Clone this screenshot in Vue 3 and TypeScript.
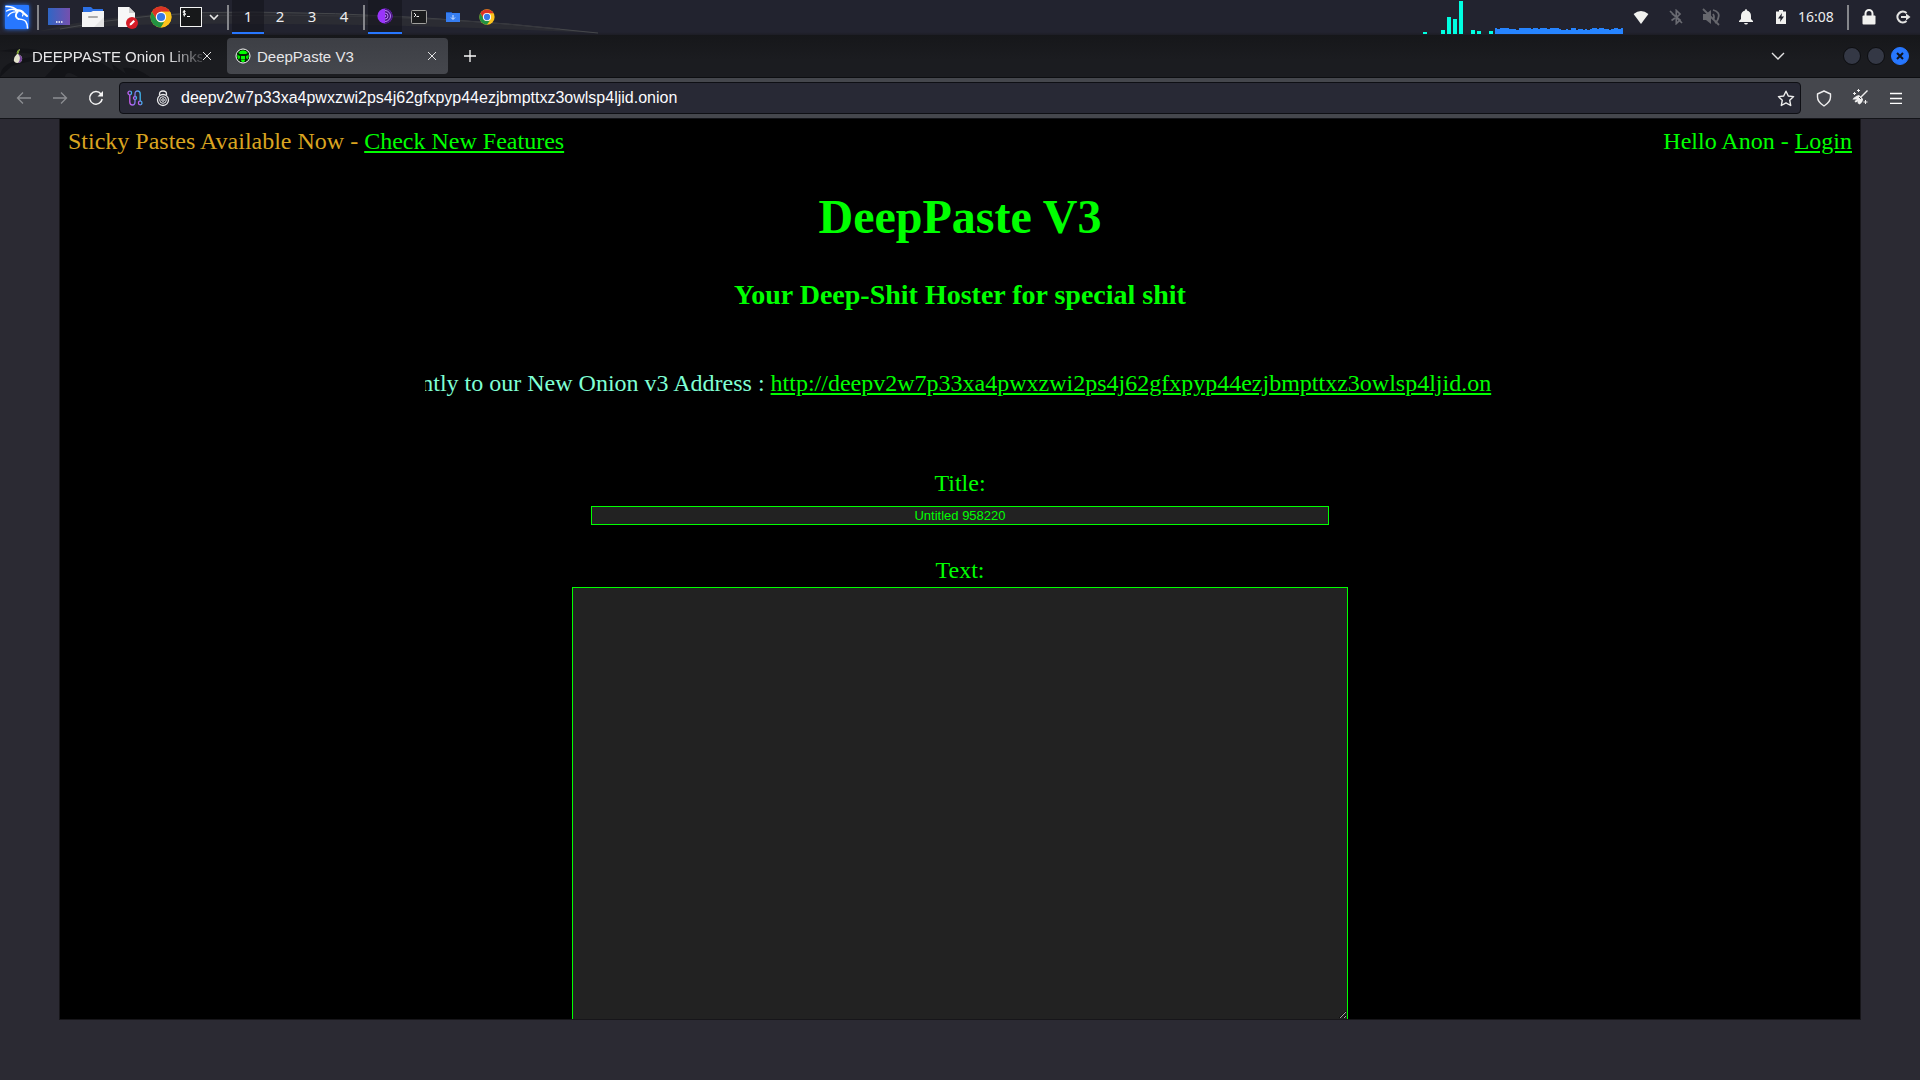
<script setup lang="ts">
import { ref } from 'vue'

const address = 'deepv2w7p33xa4pwxzwi2ps4j62gfxpyp44ezjbmpttxz3owlsp4ljid.onion'
const url = ref(address)
const title = ref('Untitled 958220')
const body = ref('')
const workspaces = [1, 2, 3, 4]
const activeWorkspace = ref(1)

// CPU load samples, one bar each; zero leaves a gap
const load = [2, 0, 0, 4, 17, 15, 33, 0, 4, 3, 0, 3]
const noise = [6, 5, 6, 6, 6, 6, 5, 5, 5, 4, 6, 6, 6, 6, 6, 5, 6, 6, 5, 6, 6, 6, 5, 6, 6, 6, 6, 5, 4, 4, 5, 4, 6, 6, 4, 5, 5, 4, 5, 4, 5, 6, 6, 5, 6, 6, 5, 5, 4, 5, 6, 6, 5, 6]
</script>

<template>
  <div class="desktop">
    <header class="panel">
      <svg class="wallpaper" width="640" height="35" viewBox="0 0 640 35" aria-hidden="true">
        <path d="M40 31Q120 10 260 12Q420 13 600 33Q400 24 260 24Q130 22 40 31Z" fill="#2b2c33" />
        <path d="M60 29Q150 11 250 12Q420 13 598 33" fill="none" stroke="#45474b" />
        <path d="M190 16Q400 12 560 29" fill="none" stroke="#36373d" />
      </svg>
      <button class="cell" aria-label="Applications">
        <svg class="kali" width="26" height="26" viewBox="0 0 26 26">
          <rect x="1" y="1" width="24" height="24" rx="1" fill="#2777ff" />
          <g fill="none" stroke="#fff" stroke-linecap="round">
            <path d="M2 2.500Q9 2 14 6.500M2.500 7Q8 3.500 14 7M4 12Q7 7 14 8" stroke-width="1.400" />
            <path d="M12 6.500Q17 5.500 19.500 9L23 12" stroke-width="2.200" />
            <path d="M19.500 9L18.500 12" stroke-width="1.200" />
            <path d="M13 8.500Q10 12.500 14.500 15" stroke-width="2" />
            <path d="M14.500 15Q21 15.500 22 18Q23.500 20 23.500 24" stroke-width="1.500" />
          </g>
        </svg>
      </button>
      <span class="bar"></span>
      <button class="cell" aria-label="Show desktop">
        <svg width="22" height="18" viewBox="0 0 22 18">
          <defs><linearGradient id="desk"><stop stop-color="#2f66c5" /><stop offset="1" stop-color="#7650ae" /></linearGradient></defs>
          <path fill="url(#desk)" d="M0 0H22V17H0Z" /><path d="M8 14h1.500M10.500 14h1.500M13 14h1.500" stroke="#fff" stroke-width="1.500" />
        </svg>
      </button>
      <button class="cell" aria-label="Files">
        <svg width="22" height="20" viewBox="0 0 22 20"><path d="M1 6V0H9L11 2H21V6Z" fill="#2c70e4" /><path d="M0 5H9L11 4H22V20H0Z" fill="#f4f4f4" /><path d="M22 10V20H12Z" fill="#e3e3e3" /><path d="M7 10h8" stroke="#aaa" stroke-width="2" stroke-linecap="round" /></svg>
      </button>
      <button class="cell" aria-label="Text editor">
        <svg width="22" height="24" viewBox="0 0 22 24"><path d="M2 2H13L19 8V22H2Z" fill="#f7f7f7" /><path d="M13 2V8H19Z" fill="#cfcfcf" /><circle cx="16" cy="18" r="6" fill="#d51c27" /><path d="M13.500 20.500L14 18.500L17.500 15L19 16.500L15.500 20Z" fill="#fff" /></svg>
      </button>
      <button class="cell" aria-label="Chrome">
        <svg width="22" height="22" viewBox="0 0 22 22"><circle cx="11" cy="11" r="10.500" fill="#fbc116" /><path d="M1.900 5.800A10.500 10.500 0 0 1 20.100 5.800H11L6.500 13.600Z" fill="#dc3325" /><path d="M1.900 5.800L6.500 13.600Q8.500 16.500 11 16.200H15L10.700 21.500A10.500 10.500 0 0 1 1.900 5.800Z" fill="#229342" /><path d="M15.500 13.600L11 21.500A10.500 10.500 0 0 0 20.100 5.800H11Z" fill="#fcc31c" /><circle cx="11" cy="11" r="5.200" fill="#fff" /><circle cx="11" cy="11" r="4.100" fill="#3778e6" /></svg>
      </button>
      <button class="cell term" aria-label="Terminal">
        <svg width="22" height="20" viewBox="0 0 22 20"><rect x=".5" y=".5" width="21" height="19" fill="#17181a" stroke="#f4f4f4" /><path d="M5.500 4.500Q3 3.500 3 5Q3 6 4.500 6Q6 6.500 5.500 7.500Q4.500 8.500 3 7.500M4.300 3V9.500M7 9.500H10" fill="none" stroke="#fff" /></svg>
      </button>
      <button class="cell more" aria-label="More terminals">
        <svg width="10" height="8" viewBox="0 0 10 8"><path d="M1 2L5 6L9 2" fill="none" stroke="#e8e8e8" stroke-width="1.600" /></svg>
      </button>
      <span class="bar"></span>
      <button v-for="n in workspaces" :key="n" class="space" :class="{ active: n === activeWorkspace }" @click="activeWorkspace = n">{{ n }}</button>
      <span class="bar"></span>
      <button class="cell active" aria-label="Tor Browser">
        <svg width="16" height="16" viewBox="0 0 16 16"><circle cx="8" cy="8" r="7.600" fill="#9a35fb" /><path d="M8 .4A7.600 7.600 0 0 1 8 15.600Z" fill="#4d1787" /><path d="M8 2.500A5.500 5.500 0 0 1 8 13.500M8 5A3 3 0 0 1 8 11" fill="none" stroke="#b784f2" /><path d="M8 7A1 1 0 0 1 8 9Z" fill="#c69aff" /></svg>
      </button>
      <button class="cell" aria-label="Terminal window">
        <svg width="16" height="14" viewBox="0 0 16 14"><rect x=".5" y=".5" width="15" height="13" rx="1" fill="#1b1c1e" stroke="#a0a09d" /><path d="M3 3L5 5L3 7M5.500 6.500H8" fill="none" stroke="#eee" /></svg>
      </button>
      <button class="cell" aria-label="Downloads window">
        <svg width="14" height="12" viewBox="0 0 14 12"><path d="M0 1H5L6 2H14V11H0Z" fill="#367df0" /><path d="M0 1H5L6 2H0Z" fill="#1a5ac5" /><path d="M7 4V8M5 6.500L7 8.500L9 6.500" stroke="#d7e7ff" fill="none" /></svg>
      </button>
      <button class="cell" aria-label="Chrome window">
        <svg width="16" height="16" viewBox="0 0 22 22"><circle cx="11" cy="11" r="10.500" fill="#fcc31c" /><path d="M1.900 5.800A10.500 10.500 0 0 1 20.100 5.800H11L6.500 13.600Z" fill="#dc3325" /><path d="M1.900 5.800L6.500 13.600Q8.500 16.500 11 16.200H15L10.700 21.500A10.500 10.500 0 0 1 1.900 5.800Z" fill="#229342" /><circle cx="11" cy="11" r="5.600" fill="#fff" /><circle cx="11" cy="11" r="4.300" fill="#3778e6" /></svg>
      </button>

      <span class="grow"></span>
      <div class="load" aria-hidden="true">
        <i v-for="(h, i) in load" :key="i" :style="{ height: h + 'px' }"></i>
      </div>
      <svg class="noise" width="128" height="6" viewBox="0 0 54 6" preserveAspectRatio="none" aria-hidden="true">
        <rect v-for="(h, i) in noise" :key="i" :x="i" :y="6 - h" width="1" :height="h" fill="#2684ff" shape-rendering="crispEdges" />
      </svg>
      <button class="cell status" aria-label="Network">
        <svg width="16" height="16" viewBox="0 0 16 16"><path d="M8 15L.6 5Q8-1 15.400 5Z" fill="#f1f1ef" /></svg>
      </button>
      <button class="cell status" aria-label="Bluetooth">
        <svg width="16" height="16" viewBox="0 0 16 16" fill="none" stroke="#6a6b72" stroke-width="1.700"><path d="M4 4.500L12 11L8.300 14.500V1.500L12 5L9 8M7 9L3.500 11.500M2 2L14 14" /></svg>
      </button>
      <button class="cell status" aria-label="Sound muted">
        <svg width="18" height="18" viewBox="0 0 18 18"><path d="M1 6H4L9 2V16L4 12H1Z" fill="#66676d" /><path d="M11 6Q13 9 11 12M11 2Q18 4 16.500 9Q16 13 13 15M1 1L17 17" stroke="#66676d" stroke-width="1.800" fill="none" /></svg>
      </button>
      <button class="cell status" aria-label="Notifications">
        <svg width="14" height="16" viewBox="0 0 14 16"><path d="M7 0Q8 0 8 1.500Q12 2.500 12 7V10L14 12V13H0V12L2 10V7Q2 2.500 6 1.500Q6 0 7 0ZM5 14H9Q8.500 15.500 7 15.500Q5.500 15.500 5 14Z" fill="#f1f1ef" /></svg>
      </button>
      <button class="cell status" aria-label="Battery charging">
        <svg width="10" height="16" viewBox="0 0 10 16"><path d="M3 1H7V2.500H10V15H0V2.500H3Z" fill="#f1f1ef" /><path d="M6 4L2 9.500H4.500L4 13L8 7.500H5.500Z" fill="#20212c" /></svg>
      </button>
      <time class="clock">16:08</time>
      <span class="bar"></span>
      <button class="cell" aria-label="Lock">
        <svg width="14" height="16" viewBox="0 0 14 16"><path d="M3.500 7V4.500A3.500 3.500 0 0 1 10.500 4.500V7" fill="none" stroke="#f1f1ef" stroke-width="2" /><rect x="0.500" y="6.500" width="13" height="9" rx="1" fill="#f1f1ef" /></svg>
      </button>
      <button class="cell" aria-label="Log out">
        <svg width="16" height="14" viewBox="0 0 16 14"><path d="M11.500 3A5.400 5.400 0 1 0 11.500 11M6 7H12" fill="none" stroke="#e4e4e3" stroke-width="2.200" /><path d="M11 3.500L15.500 7L11 10.500Z" fill="#e4e4e3" /></svg>
      </button>
    </header>

    <div class="tabs">
      <svg class="wallpaper" width="180" height="42" viewBox="0 0 180 42" aria-hidden="true">
        <path d="M0 16Q24 10 50 18L32 22Q0 26 0 42L12 31Q40 22 60 26L45 42H65Q66 34 78 42H150Q135 31 123 33L126 39L112 29L114 36L102 28Q90 20 70 26L50 20Z" fill="#131418" />
      </svg>
      <div class="tab first">
        <svg class="fav" width="16" height="16" viewBox="0 0 16 16"><path d="M7 6Q6 3 10 1L8 6Q13 8 12 12Q11 15 7 15Q3 14 4 11Q4 9 7 6Z" fill="#e4e3ce" /><path d="M8 6Q13 8 12 12Q11 15 8 15Q12 10 8 6Z" fill="#77479a" /><path d="M7 6Q6 3 10 1L8 6Z" fill="#789d28" /></svg>
        <span class="name faded">DEEPPASTE Onion Links</span>
        <button class="close" aria-label="Close tab"><svg width="10" height="10" viewBox="0 0 10 10"><path d="M1 1L9 9M9 1L1 9" stroke="#e3e3e4" /></svg></button>
      </div>
      <div class="tab current">
        <svg class="fav" width="16" height="16" viewBox="0 0 16 16"><circle cx="8" cy="8" r="7" fill="#031003" stroke="#fff" /><circle cx="8" cy="8" r="5.800" fill="#00e600" /><path d="M2.500 4.500L5 6H11L13.500 4.500V7L11 8V10L13 12L10 13.500V11.500H6V13.500L3 12L5 10V8L2.500 7Z" fill="#062006" /><path d="M5 3H11V6H5ZM6 8H10V11H6ZM7 12H9V14H7Z" fill="#0f0" /></svg>
        <span class="name">DeepPaste V3</span>
        <button class="close" aria-label="Close tab"><svg width="10" height="10" viewBox="0 0 10 10"><path d="M1 1L9 9M9 1L1 9" stroke="#e3e3e4" /></svg></button>
      </div>
      <button class="add" aria-label="New tab"><svg width="12" height="12" viewBox="0 0 12 12"><path d="M6 0V12M0 6H12" stroke="#fafafa" stroke-width="1.300" /></svg></button>
      <span class="grow"></span>
      <button class="list" aria-label="List all tabs"><svg width="14" height="8" viewBox="0 0 14 8"><path d="M1 1L7 7L13 1" fill="none" stroke="#e3e3e4" stroke-width="1.400" /></svg></button>
      <div class="window">
        <button class="dot" aria-label="Minimize"></button>
        <button class="dot" aria-label="Maximize"></button>
        <button class="dot quit" aria-label="Close window"><svg width="8" height="8" viewBox="0 0 8 8"><path d="M1 1L7 7M7 1L1 7" stroke="#10131c" stroke-width="2" /></svg></button>
      </div>
    </div>

    <nav class="tools">
      <button class="tool" aria-label="Back"><svg width="16" height="16" viewBox="0 0 16 16"><path d="M15 8H1.500M7 2.500L1.500 8L7 13.500" fill="none" stroke="#8c8e92" stroke-width="1.300" /></svg></button>
      <button class="tool" aria-label="Forward"><svg width="16" height="16" viewBox="0 0 16 16"><path d="M1 8H14.500M9 2.500L14.500 8L9 13.500" fill="none" stroke="#8c8e92" stroke-width="1.300" /></svg></button>
      <button class="tool" aria-label="Reload"><svg width="16" height="16" viewBox="0 0 16 16"><path d="M13 4A6.300 6.300 0 1 0 14.200 9" fill="none" stroke="#f4f4f4" stroke-width="1.500" /><path d="M15 1V6.500H9.500Z" fill="#f4f4f4" /></svg></button>
      <div class="address">
        <button class="info" aria-label="Tor circuit">
          <svg width="16" height="16" viewBox="0 0 16 16" fill="none" stroke-width="1.300">
            <defs><linearGradient id="circuit"><stop stop-color="#c85cf0" /><stop offset=".5" stop-color="#8175e8" /><stop offset="1" stop-color="#3fb6f0" /></linearGradient></defs>
            <g stroke="url(#circuit)"><circle cx="2.800" cy="3" r="1.800" /><circle cx="8" cy="8" r="1.500" /><circle cx="13.200" cy="13" r="1.800" /><path d="M2.800 5V12Q2.800 15 5.500 15Q8 15 8 12V9.500M8 6.500V4Q8 1 10.500 1Q13.200 1 13.200 4V11" /></g>
          </svg>
        </button>
        <button class="info" aria-label="Site security">
          <svg width="14" height="17" viewBox="0 0 14 17" fill="none" stroke="#e9e9eb"><path d="M3.500 5V4Q3.500 1 7 1Q10.500 1 10.500 4V5" stroke-width="1.300" /><circle cx="7" cy="10" r="5.500" stroke-width="1.300" /><circle cx="7" cy="10" r="3.300" /><circle cx="7" cy="10" r="1.300" /></svg>
        </button>
        <input v-model="url" class="url" aria-label="Address" />
        <button class="info" aria-label="Bookmark">
          <svg width="18" height="17" viewBox="0 0 18 17"><path d="M9 1.200L11.300 6L16.600 6.600L12.700 10.200L13.700 15.500L9 12.900L4.300 15.500L5.300 10.200L1.400 6.600L6.700 6Z" fill="none" stroke="#eee" stroke-width="1.400" stroke-linejoin="round" /></svg>
        </button>
      </div>
      <button class="tool" aria-label="Security level"><svg width="16" height="17" viewBox="0 0 16 17"><path d="M8 1L14.500 4V7Q14.500 12 8 16Q1.500 12 1.500 7V4Z" fill="none" stroke="#eee" stroke-width="1.400" stroke-linejoin="round" /></svg></button>
      <button class="tool" aria-label="New identity"><svg width="18" height="18" viewBox="0 0 18 18"><path d="M16.500 1.500L9.500 8.500" stroke="#eee" stroke-width="1.400" /><path d="M8 6L12 10Q12 13 8.500 15.500L6.500 14L7 12.500L4.500 13.500L3.500 12L6 10.500H1.500Q3 7.500 8 6Z" fill="#eee" /><path d="M3.500 3V6M2 4.500H5M7.500 0V3M6 1.500H9M14.500 11V15M12.500 13H16.500" stroke="#eee" /><path d="M8 8L10 10" stroke="#45474d" /></svg></button>
      <button class="tool" aria-label="Menu"><svg width="12" height="12" viewBox="0 0 12 12"><path d="M0 1.500H12M0 6.500H12M0 11.500H12" stroke="#fff" stroke-width="1.300" /></svg></button>
    </nav>

    <main class="backdrop">
      <article class="page">
        <div class="notice">
          <span class="sticky">Sticky Pastes Available Now - <a href="#features">Check New Features</a></span>
          <span>Hello Anon - <a href="#login">Login</a></span>
        </div>
        <h1>DeepPaste V3</h1>
        <h3>Your Deep-Shit Hoster for special shit</h3>
        <div class="ticker">
          <p>ntly to our New Onion v3 Address : <a href="#address">http://deepv2w7p33xa4pwxzwi2ps4j62gfxpyp44ezjbmpttxz3owlsp4ljid.on</a></p>
        </div>
        <form class="paste" @submit.prevent>
          <label for="title">Title:</label>
          <input id="title" v-model="title" class="title" type="text" />
          <label for="text">Text:</label>
          <textarea id="text" v-model="body" class="text"></textarea>
        </form>
      </article>
    </main>
  </div>
</template>

<style>
body {
  margin: 0;
  background: #2b2a33;
}
</style>

<style scoped>
.desktop {
  display: flex;
  flex-direction: column;
  min-height: 100vh;
  font-family: "Liberation Sans", Arial, sans-serif;
}
button {
  display: flex;
  align-items: center;
  justify-content: center;
  flex: none;
  box-sizing: border-box;
  padding: 0;
  border: 0;
  background: none;
  color: inherit;
  font: inherit;
}
svg {
  display: block;
  flex: none;
}
.grow {
  flex: 1;
}
.wallpaper {
  position: absolute;
  top: 0;
  left: 0;
}

/* desktop panel */
.panel {
  position: relative;
  display: flex;
  height: 35px;
  background: linear-gradient(#22232f 0 32px, #1d1d25);
  color: #ececee;
  font: 14px/34px "Noto Sans", sans-serif;
}
.panel > * {
  z-index: 1;
}
.panel > .wallpaper {
  z-index: 0;
}
.cell {
  width: 34px;
  height: 34px;
}
.kali {
  filter: drop-shadow(0 0 2px #2777ff);
}
.term {
  width: 26px;
}
.more {
  width: 20px;
}
.status {
  width: 35px;
}
.bar {
  flex: none;
  width: 2px;
  height: 25px;
  margin: 5px 3px;
  background: #85868b;
}
.space {
  width: 32px;
  height: 34px;
  border-bottom: 2px solid transparent;
  font-size: 15px;
  line-height: 32px;
}
.active {
  background: rgb(20 20 28 / 60%);
  border-bottom: 2px solid #2777ff;
}
.load {
  display: flex;
  align-items: flex-end;
  gap: 2px;
  height: 34px;
}
.load i {
  width: 4px;
  box-sizing: border-box;
  background: #00ffe1;
}
.noise {
  align-self: flex-end;
  margin: 0 0 1px 2px;
}
.clock {
  width: 46px;
}

/* tab strip */
.tabs {
  position: relative;
  display: flex;
  align-items: center;
  box-sizing: border-box;
  height: 43px;
  border-bottom: 1px solid #0d0e11;
  background: linear-gradient(#16171a, #1b1c20 60%);
  color: #e6e6e8;
  font-size: 15px;
}
.tab {
  position: relative;
  display: flex;
  align-items: center;
  box-sizing: border-box;
  width: 221px;
  height: 36px;
  padding: 0 11px 0 8px;
  border-radius: 4px;
}
.first {
  margin-right: 4px;
  width: 223px;
  padding-left: 10px;
}
.current {
  background: linear-gradient(#3d3f45, #45474d);
}
.name {
  flex: 1;
  margin-left: 6px;
  overflow: hidden;
  white-space: nowrap;
}
.faded {
  mask-image: linear-gradient(to right, #000 80%, rgb(0 0 0 / 20%));
}
.close {
  width: 10px;
  height: 20px;
}
.add {
  width: 44px;
  height: 36px;
}
.list {
  width: 36px;
  height: 36px;
  margin-right: 47px;
}
.window {
  display: flex;
  gap: 6px;
  margin-right: 11px;
}
.dot {
  width: 18px;
  height: 18px;
  border: 1px solid #0c0d10;
  border-radius: 50%;
  background: #343845;
}
.quit {
  border-color: #2777ff;
  background: #2777ff;
}

/* toolbar */
.tools {
  display: flex;
  align-items: center;
  box-sizing: border-box;
  height: 41px;
  padding: 0 6px;
  border-bottom: 1px solid #131419;
  background: #45474d;
}
.tool {
  width: 36px;
  height: 32px;
}
.address {
  display: flex;
  align-items: center;
  flex: 1;
  box-sizing: border-box;
  height: 32px;
  margin: 0 5px;
  padding-left: 1px;
  border: 1px solid #0e0f14;
  border-radius: 4px;
  background: #282935;
}
.info {
  width: 28px;
  height: 30px;
}
.url {
  flex: 1;
  min-width: 0;
  margin-left: 4px;
  padding: 0;
  border: 0;
  outline: 0;
  background: none;
  color: #fbfbfe;
  font: 16px/20px "Liberation Sans", Arial, sans-serif;
}

/* paste site */
.backdrop {
  display: flex;
  flex: 1;
  padding: 0 59px 60px;
}
.page {
  display: flex;
  flex-direction: column;
  flex: 1;
  min-width: 0;
  padding: 9px 8px 0;
  border: 1px solid #17161a;
  border-top: 0;
  background: #000;
  color: #0f0;
  font: 24px/27px "Liberation Serif", "Times New Roman", serif;
}
.page a {
  color: #0f0;
}
.notice {
  display: flex;
  justify-content: space-between;
}
.sticky {
  color: #daa520;
}
h1 {
  margin: 34px 0 35px;
  font-size: 48px;
  line-height: 55px;
  text-align: center;
}
h3 {
  margin: 0 0 59px;
  font-size: 28px;
  line-height: 32px;
  text-align: center;
}
.ticker {
  display: flex;
  justify-content: flex-end;
  box-sizing: border-box;
  width: 60%;
  margin: 0 auto 73px;
  padding-right: 4px;
  overflow: hidden;
  color: #7fffd4;
  white-space: nowrap;
}
.ticker p {
  margin: 0;
}
.paste {
  display: flex;
  flex-direction: column;
  align-items: center;
  flex: 1;
}
.title,
.text {
  box-sizing: border-box;
  max-width: 100%;
  border: 1px solid #0f0;
  outline: 0;
  background: #222;
  color: #0f0;
  font: 13px/15px "Liberation Sans", Arial, sans-serif;
}
.title {
  width: 738px;
  height: 19px;
  margin: 9px 0 32px;
  padding: 1px;
  text-align: center;
}
.text {
  flex: 1;
  width: 776px;
  min-height: 240px;
  margin-top: 3px;
  border-bottom: 0;
}
</style>
